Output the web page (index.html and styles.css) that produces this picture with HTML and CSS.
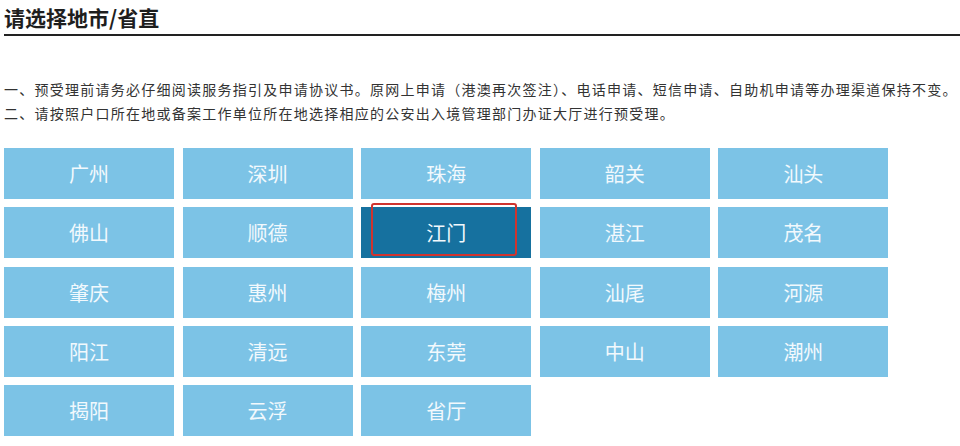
FILE: index.html
```html
<!DOCTYPE html>
<html lang="zh-CN">

<head>
	<meta charset="UTF-8">
	<meta name="viewport" content="width=device-width, initial-scale=1.0">
	<title>请选择地市/省直</title>
	<link rel="stylesheet" href="styles.css">
</head>

<body>
	<h1 class="page-title">请选择地市/省直</h1>
	<div class="notice">
		<p>一、预受理前请务必仔细阅读服务指引及申请协议书。原网上申请（港澳再次签注）、电话申请、短信申请、自助机申请等办理渠道保持不变。</p>
		<p>二、请按照户口所在地或备案工作单位所在地选择相应的公安出入境管理部门办证大厅进行预受理。</p>
	</div>
	<ul class="city-list">
		<li><a>广州</a></li>
		<li><a>深圳</a></li>
		<li><a>珠海</a></li>
		<li><a>韶关</a></li>
		<li><a>汕头</a></li>
		<li><a>佛山</a></li>
		<li><a>顺德</a></li>
		<li class="city-active"><a>江门</a><span class="mark"></span></li>
		<li><a>湛江</a></li>
		<li><a>茂名</a></li>
		<li><a>肇庆</a></li>
		<li><a>惠州</a></li>
		<li><a>梅州</a></li>
		<li><a>汕尾</a></li>
		<li><a>河源</a></li>
		<li><a>阳江</a></li>
		<li><a>清远</a></li>
		<li><a>东莞</a></li>
		<li><a>中山</a></li>
		<li><a>潮州</a></li>
		<li><a>揭阳</a></li>
		<li><a>云浮</a></li>
		<li><a>省厅</a></li>
	</ul>
</body>

</html>
```

FILE: styles.css
```css
html,
body {
	margin: 0;
	padding: 0;
	background: #fff;
}

body {
	padding-left: 4px;
	font-family: "Noto Sans CJK SC", "Liberation Sans", sans-serif;
	color: #333;
}

.page-title {
	margin: 0;
	padding: 3px 0 2px;
	font-size: 21px;
	line-height: 29px;
	font-weight: bold;
	color: #1e1e1e;
	border-bottom: 2px solid #222;
}

.notice {
	margin-top: 41px;
}

.notice p {
	margin: 0;
	font-size: 14px;
	line-height: 24px;
	letter-spacing: 1.25px;
	white-space: nowrap;
}

.city-list {
	list-style: none;
	margin: 23px 0 0;
	padding: 0;
	display: grid;
	grid-template-columns: repeat(5, 170px);
	grid-auto-rows: 51px;
	column-gap: 8.6px;
	row-gap: 8.3px;
}

.city-list li {
	position: relative;
	background: #7cc3e6;
}

.city-list a {
	display: flex;
	height: 100%;
	align-items: center;
	justify-content: center;
	font-size: 20px;
	color: #f2f9fd;
	cursor: pointer;
}

.city-active {
	background: #16719f !important;
}

.city-active .mark {
	position: absolute;
	left: 10px;
	top: -4px;
	width: 142px;
	height: 49px;
	border: 2px solid #d0342f;
	border-radius: 3px;
}
```
